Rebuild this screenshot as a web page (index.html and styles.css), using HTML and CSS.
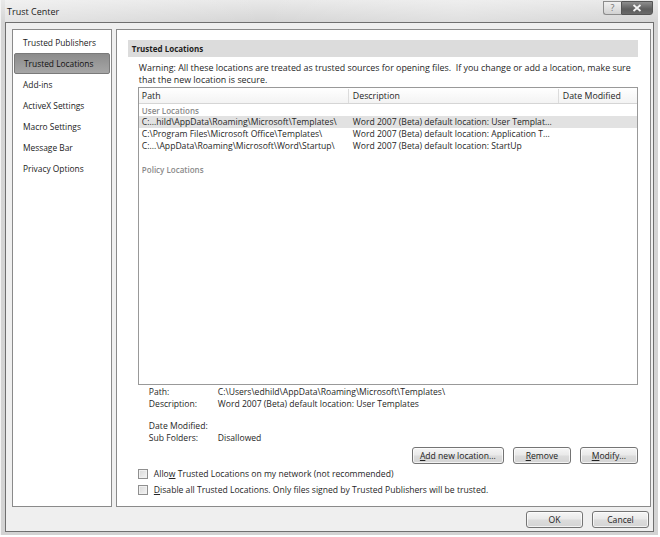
FILE: index.html
```html
<!DOCTYPE html>
<html>
<head>
<meta charset="utf-8">
<title>Trust Center</title>
<link rel="stylesheet" href="styles.css">
</head>
<body>
<div class="frame">
  <div class="titlebar">
    <span class="title">Trust Center</span>
    <div class="tb-buttons">
      <span class="tb-help">?</span>
      <span class="tb-close"><svg width="10" height="8" viewBox="0 0 10 8"><path d="M1.5 1 L8.5 7 M8.5 1 L1.5 7" stroke="#f4f4f4" stroke-width="1.8" fill="none"/></svg></span>
    </div>
  </div>
  <div class="client">
    <div class="panels">
      <ul class="nav">
        <li class="nav-item">Trusted Publishers</li>
        <li class="nav-item active">Trusted Locations</li>
        <li class="nav-item">Add-ins</li>
        <li class="nav-item">ActiveX Settings</li>
        <li class="nav-item">Macro Settings</li>
        <li class="nav-item">Message Bar</li>
        <li class="nav-item">Privacy Options</li>
      </ul>
      <div class="content">
        <div class="section-head">Trusted Locations</div>
        <p class="warning">Warning: All these locations are treated as trusted sources for opening files.&nbsp; If you change or add a location, make sure<br>that the new location is secure.</p>
        <div class="listbox">
          <div class="lb-header">
            <span class="hcell">Path</span>
            <span class="hcell">Description</span>
            <span class="hcell last">Date Modified</span>
          </div>
          <div class="group">User Locations</div>
          <div class="row selected">
            <span class="cell">C:...hild\AppData\Roaming\Microsoft\Templates\</span>
            <span class="cell">Word 2007 (Beta) default location: User Templat...</span>
            <span class="cell"></span>
          </div>
          <div class="row">
            <span class="cell">C:\Program Files\Microsoft Office\Templates\</span>
            <span class="cell">Word 2007 (Beta) default location: Application T...</span>
            <span class="cell"></span>
          </div>
          <div class="row">
            <span class="cell">C:...\AppData\Roaming\Microsoft\Word\Startup\</span>
            <span class="cell">Word 2007 (Beta) default location: StartUp</span>
            <span class="cell"></span>
          </div>
          <div class="group policy">Policy Locations</div>
        </div>
        <div class="details">
          <span class="dl">Path:</span><span class="dv">C:\Users\edhild\AppData\Roaming\Microsoft\Templates\</span>
          <span class="dl">Description:</span><span class="dv">Word 2007 (Beta) default location: User Templates</span>
          <span class="dl gap">Date Modified:</span><span class="dv gap"></span>
          <span class="dl">Sub Folders:</span><span class="dv">Disallowed</span>
        </div>
        <div class="actions">
          <button class="btn btn-add"><u>A</u>dd new location...</button>
          <button class="btn btn-small"><u>R</u>emove</button>
          <button class="btn btn-small"><u>M</u>odify...</button>
        </div>
        <label class="check"><span class="box"></span><span>Allo<u>w</u> Trusted Locations on my network (not recommended)</span></label>
        <label class="check"><span class="box"></span><span><u>D</u>isable all Trusted Locations. Only files signed by Trusted Publishers will be trusted.</span></label>
      </div>
    </div>
    <div class="footer">
      <button class="btn btn-foot">OK</button>
      <button class="btn btn-foot">Cancel</button>
    </div>
  </div>
</div>
</body>
</html>
```

FILE: styles.css
```css
* { box-sizing: border-box; }
html, body { margin: 0; padding: 0; background: #ffffff; }
body {
  font-family: "Open Sans", "Noto Sans", sans-serif;
  font-size: 8.6px;
  color: #262626;
}
.frame {
  width: 658px;
  height: 535px;
  padding: 0 4px 3px 4px;
  display: flex;
  flex-direction: column;
  background: linear-gradient(to bottom, #e9e9e9 0px, #d5d5d5 22px, #d3d3d3 100%);
  border-left: 1px solid #f4f4f4;
}
.titlebar {
  height: 22px;
  display: flex;
  align-items: center;
  padding-left: 2px;
  background: linear-gradient(to right, rgba(255,255,255,0.35), rgba(255,255,255,0) 40%, rgba(255,255,255,0.25) 70%, rgba(255,255,255,0));
}
.title {
  font-size: 9px;
  color: #1a1a1a;
  margin-top: 1px;
}
.tb-buttons {
  margin-left: auto;
  margin-right: 1px;
  align-self: flex-start;
  display: flex;
  height: 14px;
  margin-top: 1px;
}
.tb-help {
  width: 18px;
  height: 14px;
  border: 1px solid #8c8c8c;
  border-right: none;
  border-radius: 0 0 0 3px;
  background: linear-gradient(to bottom, #f0f0f0, #d2d2d2);
  color: #707070;
  font-size: 9px;
  line-height: 12px;
  text-align: center;
}
.tb-close {
  width: 32px;
  height: 14px;
  border: 1px solid #555;
  border-radius: 0 0 3px 0;
  background: linear-gradient(to bottom, #8e8e8e, #5d5d5d 60%, #6a6a6a);
  display: flex;
  align-items: center;
  justify-content: center;
}
.client {
  flex: 1;
  background: #efefef;
  border: 1px solid #6f6f6f;
  padding: 6px 2px 2px 6px;
  display: flex;
  flex-direction: column;
}
.panels {
  height: 478px;
  display: flex;
  gap: 4px;
}
.nav {
  list-style: none;
  margin: 0;
  padding: 2px 0;
  width: 100px;
  background: #fff;
  border: 1px solid #8a8a8a;
}
.nav-item {
  height: 21px;
  line-height: 21px;
  margin: 0 1px;
  padding-left: 9px;
  font-size: 8.4px;
  color: #222;
  white-space: nowrap;
}
.nav-item.active {
  background: linear-gradient(to bottom, #8c8c8c, #a6a6a6);
  border: 1px solid #7a7a7a;
  border-radius: 2px;
  line-height: 19px;
  color: #111;
}
.content {
  width: 536px;
  background: #fff;
  border: 1px solid #8a8a8a;
  padding: 10px 12px 0 11px;
}
.section-head {
  height: 17px;
  line-height: 17px;
  background: #dcdcdc;
  font-weight: bold;
  font-size: 8px;
  padding-left: 4px;
  color: #1e1e1e;
}
.warning {
  margin: 5px 0 1px 11px;
  line-height: 12px;
  font-size: 8.9px;
  white-space: nowrap;
}
.listbox {
  margin-left: 10px;
  width: 500px;
  height: 298px;
  border: 1px solid #999;
}
.lb-header, .row {
  display: grid;
  grid-template-columns: 210px 210px 1fr;
}
.lb-header {
  height: 16px;
  line-height: 14px;
  padding-top: 1px;
  font-size: 8.8px;
  background: linear-gradient(to bottom, #fff, #f3f3f3);
  border-bottom: 1px solid #d5d5d5;
}
.hcell {
  padding-left: 3px;
  border-right: 1px solid #dcdcdc;
}
.hcell + .hcell { padding-left: 4px; }
.hcell.last { border-right: none; }
.group {
  height: 12px;
  line-height: 13px;
  padding-left: 3px;
  font-size: 8px;
  color: #8a8a8a;
  font-weight: 600;
}
.group.policy { margin-top: 11px; }
.row {
  height: 12px;
  line-height: 12px;
}
.row.selected { background: #e2e2e2; }
.cell {
  padding-left: 3px;
  white-space: nowrap;
  overflow: hidden;
}
.cell + .cell { padding-left: 4px; }
.details {
  margin: 1px 0 0 21px;
  display: grid;
  grid-template-columns: 69px 1fr;
  line-height: 12px;
}
.details .gap { margin-top: 10px; }
.dv { white-space: nowrap; min-height: 12px; }
.actions {
  margin: 3px 0 0 10px;
  width: 500px;
  display: flex;
  justify-content: flex-end;
  gap: 9px;
}
.btn {
  font-family: inherit;
  font-size: 8.6px;
  color: #222;
  height: 17px;
  padding: 0;
  border: 1px solid #747474;
  border-radius: 3px;
  background: linear-gradient(to bottom, #f6f6f6 0%, #e9e9e9 48%, #dcdcdc 52%, #d4d4d4 100%);
  box-shadow: inset 0 0 0 1px rgba(255,255,255,0.7);
}
.btn-add { width: 92px; }
.btn-small { width: 58px; }
.check {
  display: flex;
  align-items: center;
  gap: 6px;
  height: 16px;
  margin-left: 10px;
  white-space: nowrap;
}
.check:first-of-type { margin-top: 2px; }
.box {
  width: 10px;
  height: 10px;
  border: 1px solid #8f8f8f;
  background: linear-gradient(135deg, #d8d8d8, #f4f4f4);
  box-shadow: inset 0 0 0 1px #f0f0f0;
}
.footer {
  margin-top: 4px;
  padding-right: 2px;
  display: flex;
  justify-content: flex-end;
  gap: 9px;
}
.btn-foot { width: 57px; }
```
